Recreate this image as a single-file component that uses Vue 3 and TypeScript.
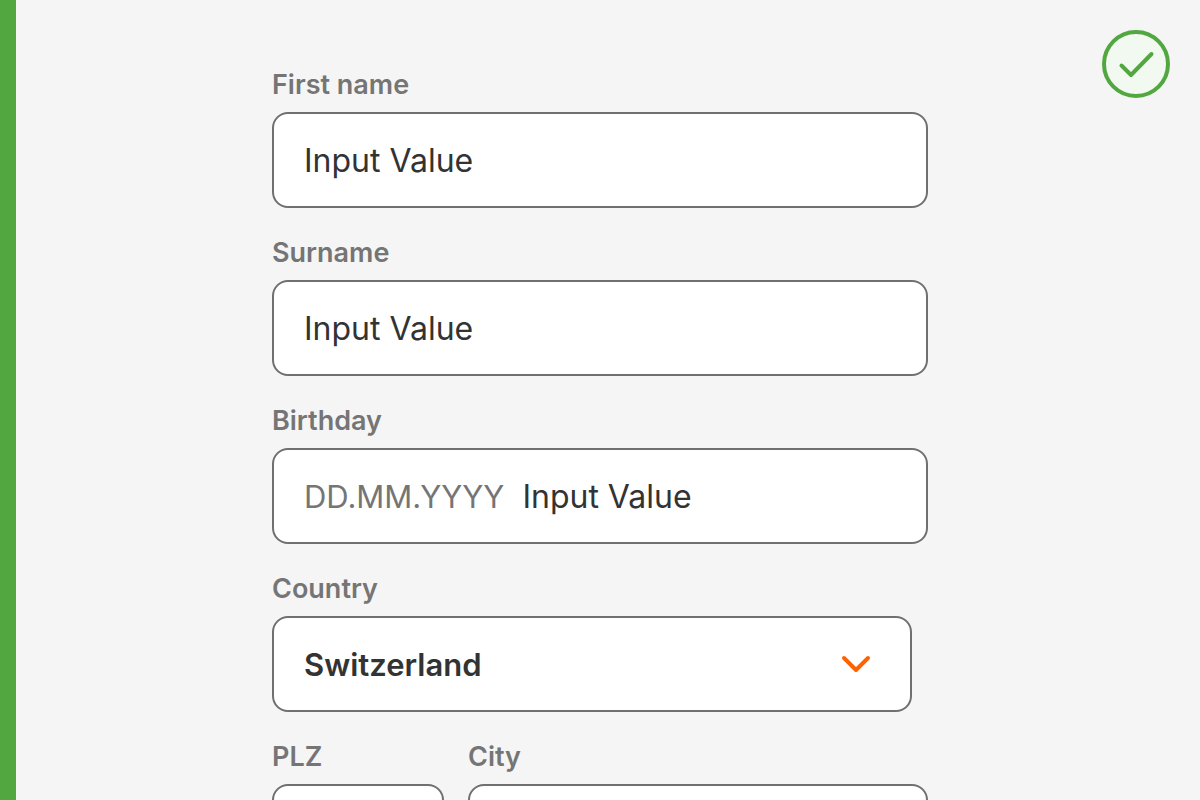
<script setup lang="ts">
import { ref } from 'vue'

const firstName = ref('Input Value')
const surname = ref('Input Value')
const birthday = ref('Input Value')
const country = ref('Switzerland')
const plz = ref('')
const city = ref('')
</script>

<template>
  <main class="page">
    <form class="form" @submit.prevent>
      <div class="field">
        <label for="first-name">First name</label>
        <input id="first-name" v-model="firstName" class="box" type="text" />
      </div>
      <div class="field">
        <label for="surname">Surname</label>
        <input id="surname" v-model="surname" class="box" type="text" />
      </div>
      <div class="field">
        <label for="birthday">Birthday</label>
        <div class="box date">
          <span class="hint">DD.MM.YYYY</span>
          <input id="birthday" v-model="birthday" type="text" />
        </div>
      </div>
      <div class="field country">
        <label for="country">Country</label>
        <div class="select">
          <select id="country" v-model="country" class="box">
            <option>Switzerland</option>
          </select>
          <svg class="chevron" viewBox="0 0 32 20" width="32" height="20" aria-hidden="true">
            <path d="M4 4 L16 16 L28 4" />
          </svg>
        </div>
      </div>
      <div class="row">
        <div class="field plz">
          <label for="plz">PLZ</label>
          <input id="plz" v-model="plz" class="box" type="text" />
        </div>
        <div class="field city">
          <label for="city">City</label>
          <input id="city" v-model="city" class="box" type="text" />
        </div>
      </div>
    </form>
    <svg class="badge" viewBox="0 0 68 68" width="68" height="68" role="img" aria-label="Correct">
      <circle cx="34" cy="34" r="32" />
      <path d="M19.5 35.5 L29 45 L49.5 24" />
    </svg>
  </main>
</template>

<style>
body {
  margin: 0;
  overflow: hidden;
}
</style>

<style scoped>
.page {
  position: relative;
  box-sizing: border-box;
  height: 100vh;
  overflow: hidden;
  padding: 64px 272px 0 256px;
  border-left: 16px solid #52a740;
  background: #f5f5f5;
  font-family: Inter, "Liberation Sans", sans-serif;
}

.form {
  display: flex;
  flex-direction: column;
  gap: 24px;
}

.field {
  display: flex;
  flex-direction: column;
  gap: 6px;
  min-width: 0;
}

label {
  color: #757575;
  font-size: 27px;
  font-weight: 600;
  line-height: 42px;
}

.box {
  box-sizing: border-box;
  width: 100%;
  height: 96px;
  padding: 0 30px;
  border: 2px solid #707070;
  border-radius: 16px;
  background: #fff;
}

input,
select,
.hint {
  margin: 0;
  color: #333;
  font-family: inherit;
  font-size: 32px;
}

.date {
  display: flex;
  align-items: center;
  gap: 18px;
}

.date .hint {
  color: #757575;
  font-size: 31px;
}

.date input {
  flex: 1;
  min-width: 0;
  padding: 0;
  border: 0;
  background: none;
}

.country {
  margin-right: 16px;
}

.select {
  position: relative;
}

select {
  display: block;
  appearance: none;
  font-size: 31px;
  font-weight: 600;
}

.chevron {
  position: absolute;
  top: 38px;
  right: 40px;
  fill: none;
  stroke: #ff6200;
  stroke-width: 4;
  stroke-linecap: round;
  stroke-linejoin: round;
  pointer-events: none;
}

.row {
  display: flex;
  gap: 24px;
}

.plz {
  flex: 0 0 172px;
}

.city {
  flex: 1;
}

.badge {
  position: absolute;
  top: 30px;
  right: 30px;
  fill: none;
  stroke: #52a740;
  stroke-width: 4;
  stroke-linecap: round;
  stroke-linejoin: round;
}

.badge circle {
  fill: #f1f9f0;
}
</style>
